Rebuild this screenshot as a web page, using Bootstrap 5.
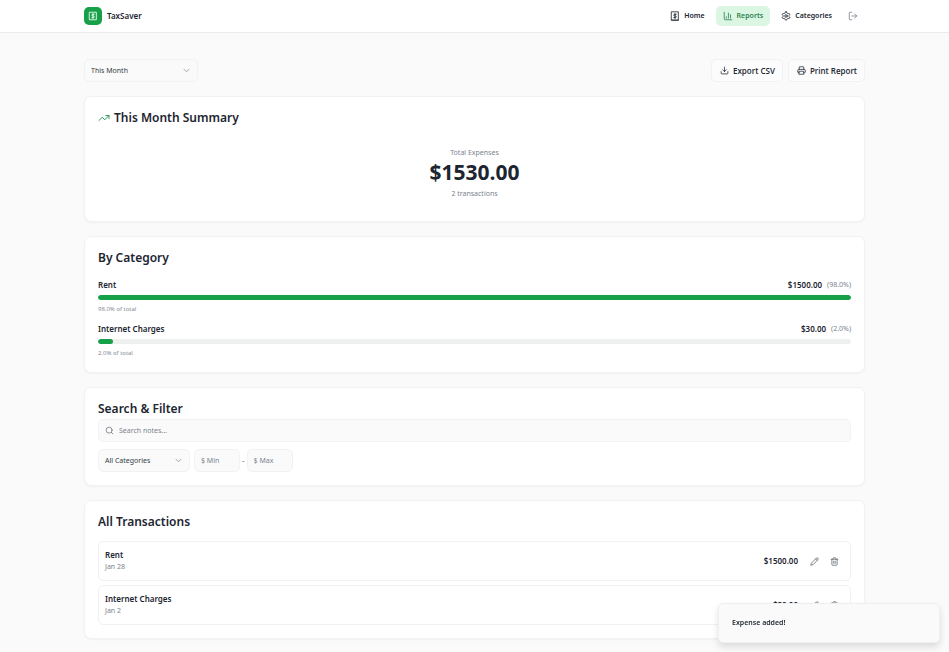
<!DOCTYPE html>
<html lang="en">
<head>
<meta charset="utf-8">
<meta name="viewport" content="width=device-width, initial-scale=1">
<title>TaxSaver – Reports</title>
<link href="https://cdn.jsdelivr.net/npm/bootstrap@5.3.0/dist/css/bootstrap.min.css" rel="stylesheet">
<style>
:root { --ink: #1c2530; --muted: #7b828e; --line: #f1f2f3; --field: #fafafa; --green: #16a048; }
body { font-family: "Noto Sans", "Open Sans", sans-serif; font-size: 8px; line-height: 12px; color: var(--ink); background: #fafafa; }
svg { fill: none; stroke: currentColor; stroke-width: 2; stroke-linecap: round; stroke-linejoin: round; width: 9px; height: 9px; flex: none; display: block; }
.shell { max-width: 781px; width: calc(100% - 32px); margin: 0 auto; }
.topbar { background: #fff; border-bottom: 1px solid #e9eaeb; }
.topbar .shell { height: 32px; }
.brand { color: var(--ink); gap: 5px; }
.logo { width: 18px; height: 18px; border-radius: 5px; background: var(--green); color: #fff; }
.logo svg { width: 10px; height: 10px; }
.tab-link { color: var(--ink); height: 20px; padding: 0 7px; gap: 4px; border-radius: 5px; font-weight: 600; font-size: 7px; }
.tab-link svg { width: 10px; height: 10px; }
.tab-link.active { background: #dcf6e4; color: #2b8350; }
.tab-link.soft { color: var(--muted); margin-left: 2px; }
.tools { padding-top: 26px; }
.tool { font-family: "Open Sans", sans-serif; height: 23px; padding: 0 7px 0 8px; gap: 4px; border: 1px solid var(--line); border-radius: 5px; background: #fcfcfc; color: var(--ink); font-size: 8px; line-height: 12px; font-weight: 600; }
.tool-row { gap: 5px; }
.field { height: 23px; min-height: 0; border: 1px solid var(--line); border-radius: 5px; background-color: var(--field); color: #343c46; font-size: 7px; line-height: 12px; padding: 0 6px; }
.field::placeholder { color: var(--muted); opacity: 1; }
select.field { padding: 0 16px 0 6px; background-size: 7px 7px; background-position: right 7px center; background-image: url("data:image/svg+xml,%3Csvg xmlns='http://www.w3.org/2000/svg' viewBox='0 0 16 16'%3E%3Cpath fill='none' stroke='%23808690' stroke-width='1.6' stroke-linecap='round' stroke-linejoin='round' d='m2 5 6 6 6-6'/%3E%3C/svg%3E"); }
.period { width: 114px; }
.cat-select { width: 92px; }
.amount-box { width: 46px; }
.range { gap: 2px; }
.panel { background: #fff; border: 1px solid var(--line); border-radius: 7px; box-shadow: 0 1px 2px rgba(0,0,0,.04); padding: 13px; }
.panel h2 { font-size: 12px; line-height: 16px; font-weight: 600; margin: 0; }
.panel h2 svg { width: 12px; height: 12px; color: #2f9a58; }
.stack { gap: 14px; }
.soft { color: var(--muted); }
.fine { font-family: "Open Sans", sans-serif; font-size: 6px; line-height: 11px; }
.base { font-size: 7px; }
.name { font-size: 8px; font-weight: 600; }
.total { font-family: "Open Sans", sans-serif; font-size: 21px; line-height: 26px; font-weight: 700; margin-bottom: 3px; }
.summary-body { padding: 21px 0 8px; }
.share-list { gap: 8px; margin-top: 13px; }
.sum { gap: 5px; }
.bar { height: 5px; border-radius: 3px; background: #eef0f0; margin: 4px 0; }
.bar .progress-bar { background: var(--green); border-radius: 3px; }
.searchbox { margin-top: 2px; }
.searchbox svg { position: absolute; left: 7px; top: 7px; color: #6b727c; }
.searchbox .field { padding-left: 20px; }
.filters { margin-top: 7px; }
.entries { margin-top: 11px; }
.entry { border: 1px solid var(--line); border-radius: 5px; height: 40px; padding: 0 6px; }
.price { margin-right: 6px; }
.act { --bs-btn-padding-x: 0; --bs-btn-padding-y: 0; display: flex; align-items: center; justify-content: center; border: 0; color: #596069; width: 20px; height: 20px; }
.note { position: fixed; right: 9px; bottom: 9px; width: 222px; height: 40px; padding: 0 13px; background: #fafafa; border: 1px solid #eeeff0; border-radius: 5px; box-shadow: 0 4px 7px rgba(0,0,0,.12); font-size: 7px; font-weight: 600; }
</style>
</head>
<body>
<header class="topbar">
  <div class="shell d-flex align-items-center justify-content-between">
    <a href="#" class="brand d-flex align-items-center text-decoration-none fw-semibold">
      <span class="logo d-flex align-items-center justify-content-center"><svg viewBox="0 0 24 24"><path d="M4 3h16v18H4zM15 8h-4a2 2 0 0 0 0 4h2a2 2 0 0 1 0 4H9M12 6v12"/></svg></span>TaxSaver
    </a>
    <nav class="d-flex align-items-center" aria-label="Main">
      <a href="#" class="tab-link me-1 d-flex align-items-center text-decoration-none"><svg viewBox="0 0 24 24"><path d="M4 2h16v20H4zM15 8h-4a2 2 0 0 0 0 4h2a2 2 0 0 1 0 4H9M12 6v12M4 22h16"/></svg>Home</a>
      <a href="#" class="tab-link active me-1 d-flex align-items-center text-decoration-none" aria-current="page"><svg viewBox="0 0 24 24"><path d="M3 3v16a2 2 0 0 0 2 2h16M8 17v-3M13 17V5M18 17V9"/></svg>Reports</a>
      <a href="#" class="tab-link d-flex align-items-center text-decoration-none"><svg viewBox="0 0 24 24"><path d="M12.200 2h-.4a2 2 0 0 0-2 2v.2a2 2 0 0 1-1 1.700l-.4.3a2 2 0 0 1-2 0l-.2-.1a2 2 0 0 0-2.700.7l-.2.4a2 2 0 0 0 .7 2.700l.2.1a2 2 0 0 1 1 1.700v.5a2 2 0 0 1-1 1.800l-.2.1a2 2 0 0 0-.7 2.700l.2.4a2 2 0 0 0 2.700.7l.2-.1a2 2 0 0 1 2 0l.4.3a2 2 0 0 1 1 1.700v.2a2 2 0 0 0 2 2h.4a2 2 0 0 0 2-2v-.2a2 2 0 0 1 1-1.700l.4-.3a2 2 0 0 1 2 0l.2.1a2 2 0 0 0 2.700-.7l.2-.4a2 2 0 0 0-.7-2.700l-.2-.1a2 2 0 0 1-1-1.800v-.5a2 2 0 0 1 1-1.700l.2-.1a2 2 0 0 0 .7-2.700l-.2-.4a2 2 0 0 0-2.700-.7l-.2.1a2 2 0 0 1-2 0l-.4-.3a2 2 0 0 1-1-1.700V4a2 2 0 0 0-2-2z"/><circle cx="12" cy="12" r="3"/></svg>Categories</a>
      <button type="button" class="btn tab-link soft border-0 d-flex align-items-center" aria-label="Log out"><svg viewBox="0 0 24 24"><path d="M9 21H5a2 2 0 0 1-2-2V5a2 2 0 0 1 2-2h4M16 17l5-5-5-5M21 12H9"/></svg></button>
    </nav>
  </div>
</header>

<main class="shell stack d-flex flex-column pb-2">
  <div class="tools d-flex justify-content-between align-items-center">
    <select class="form-select field period" aria-label="Period"><option>This Month</option></select>
    <div class="tool-row d-flex">
      <button type="button" class="btn tool d-flex align-items-center"><svg viewBox="0 0 24 24"><path d="M21 15v4a2 2 0 0 1-2 2H5a2 2 0 0 1-2-2v-4M7 10l5 5 5-5M12 15V3"/></svg>Export CSV</button>
      <button type="button" class="btn tool d-flex align-items-center"><svg viewBox="0 0 24 24"><path d="M6 18H4a2 2 0 0 1-2-2v-5a2 2 0 0 1 2-2h16a2 2 0 0 1 2 2v5a2 2 0 0 1-2 2h-2M6 9V3a1 1 0 0 1 1-1h10a1 1 0 0 1 1 1v6M6 14h12v8H6z"/></svg>Print Report</button>
    </div>
  </div>

  <section class="panel">
    <h2 class="d-flex align-items-center gap-1"><svg viewBox="0 0 24 24"><path d="m22 7-8.500 8.500-5-5L2 17M16 7h6v6"/></svg>This Month Summary</h2>
    <div class="summary-body text-center">
      <div class="soft base">Total Expenses</div>
      <div class="total">$1530.00</div>
      <div class="soft base">2 transactions</div>
    </div>
  </section>

  <section class="panel">
    <h2>By Category</h2>
    <div class="share-list d-flex flex-column">
      <div>
        <div class="base d-flex justify-content-between"><span class="name">Rent</span><span class="sum d-flex"><span class="name">$1500.00</span><span class="soft">(98.0%)</span></span></div>
        <div class="progress bar" role="progressbar" aria-label="Rent" aria-valuenow="100" aria-valuemin="0" aria-valuemax="100"><div class="progress-bar" style="width:100%"></div></div>
        <div class="soft fine">98.0% of total</div>
      </div>
      <div>
        <div class="base d-flex justify-content-between"><span class="name">Internet Charges</span><span class="sum d-flex"><span class="name">$30.00</span><span class="soft">(2.0%)</span></span></div>
        <div class="progress bar" role="progressbar" aria-label="Internet Charges" aria-valuenow="2" aria-valuemin="0" aria-valuemax="100"><div class="progress-bar" style="width:2%"></div></div>
        <div class="soft fine">2.0% of total</div>
      </div>
    </div>
  </section>

  <section class="panel">
    <h2>Search &amp; Filter</h2>
    <div class="searchbox position-relative"><svg viewBox="0 0 24 24"><circle cx="11" cy="11" r="8"/><path d="m21 21-4.300-4.300"/></svg><input type="text" class="form-control field" placeholder="Search notes..." aria-label="Search notes"></div>
    <div class="filters d-flex align-items-center gap-1">
      <select class="form-select field cat-select" aria-label="Category"><option>All Categories</option></select>
      <div class="range d-flex align-items-center">
        <input type="text" class="form-control field amount-box" placeholder="$ Min" aria-label="Minimum amount">
        <span class="soft">-</span>
        <input type="text" class="form-control field amount-box" placeholder="$ Max" aria-label="Maximum amount">
      </div>
    </div>
  </section>

  <section class="panel">
    <h2>All Transactions</h2>
    <div class="entries d-flex flex-column gap-1">
      <div class="entry d-flex align-items-center justify-content-between">
        <div class="base"><div class="name">Rent</div><div class="soft">Jan 28</div></div>
        <div class="base d-flex align-items-center"><span class="name price">$1500.00</span>
          <button type="button" class="btn act" aria-label="Edit Rent"><svg viewBox="0 0 24 24"><path d="M21.200 6.800a2.800 2.800 0 0 0-4-4L3.800 16.200 2 22l5.800-1.800zM15 5l4 4"/></svg></button>
          <button type="button" class="btn act" aria-label="Delete Rent"><svg viewBox="0 0 24 24"><path d="M3 6h18M19 6v14a2 2 0 0 1-2 2H7a2 2 0 0 1-2-2V6M8 6V4a2 2 0 0 1 2-2h4a2 2 0 0 1 2 2v2M10 11v6M14 11v6"/></svg></button></div>
      </div>
      <div class="entry d-flex align-items-center justify-content-between">
        <div class="base"><div class="name">Internet Charges</div><div class="soft">Jan 2</div></div>
        <div class="base d-flex align-items-center"><span class="name price">$30.00</span>
          <button type="button" class="btn act" aria-label="Edit Internet Charges"><svg viewBox="0 0 24 24"><path d="M21.200 6.800a2.800 2.800 0 0 0-4-4L3.800 16.200 2 22l5.800-1.800zM15 5l4 4"/></svg></button>
          <button type="button" class="btn act" aria-label="Delete Internet Charges"><svg viewBox="0 0 24 24"><path d="M3 6h18M19 6v14a2 2 0 0 1-2 2H7a2 2 0 0 1-2-2V6M8 6V4a2 2 0 0 1 2-2h4a2 2 0 0 1 2 2v2M10 11v6M14 11v6"/></svg></button></div>
      </div>
    </div>
  </section>
</main>
<div class="note d-flex align-items-center" role="status">Expense added!</div>
<script src="https://cdn.jsdelivr.net/npm/bootstrap@5.3.0/dist/js/bootstrap.bundle.min.js"></script>
</body>
</html>
